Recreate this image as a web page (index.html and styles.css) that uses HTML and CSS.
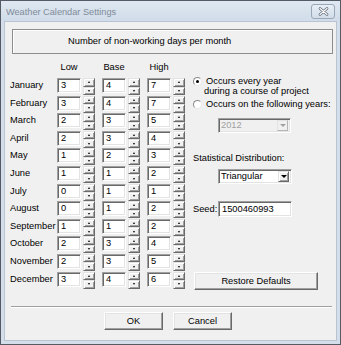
FILE: index.html
```html
<!DOCTYPE html>
<html>
<head>
<meta charset="utf-8">
<link rel="stylesheet" href="styles.css">
</head>
<body>
<div class="window">
  <div class="titlebar">
    <span class="title">Weather Calendar Settings</span>
    <div class="close"><svg width="11" height="9" viewBox="0 0 11 9"><path d="M2 1.5 L9 7.5 M9 1.5 L2 7.5" stroke="#5b6573" stroke-width="2.6" stroke-linecap="round"/><path d="M2 1.5 L9 7.5 M9 1.5 L2 7.5" stroke="#ffffff" stroke-width="1.2" stroke-linecap="round"/></svg></div>
  </div>
  <div class="client">
    <div class="banner">Number of non-working days per month</div>
    <div class="main">
      <div class="grid">
        <div></div><div class="head">Low</div><div class="head">Base</div><div class="head">High</div>

        <div class="month">January</div>
        <div class="spin"><div class="field">3</div><div class="arrows"><i class="up"></i><i class="dn"></i></div></div>
        <div class="spin"><div class="field">4</div><div class="arrows"><i class="up"></i><i class="dn"></i></div></div>
        <div class="spin"><div class="field">7</div><div class="arrows"><i class="up"></i><i class="dn"></i></div></div>

        <div class="month">February</div>
        <div class="spin"><div class="field">3</div><div class="arrows"><i class="up"></i><i class="dn"></i></div></div>
        <div class="spin"><div class="field">4</div><div class="arrows"><i class="up"></i><i class="dn"></i></div></div>
        <div class="spin"><div class="field">7</div><div class="arrows"><i class="up"></i><i class="dn"></i></div></div>

        <div class="month">March</div>
        <div class="spin"><div class="field">2</div><div class="arrows"><i class="up"></i><i class="dn"></i></div></div>
        <div class="spin"><div class="field">3</div><div class="arrows"><i class="up"></i><i class="dn"></i></div></div>
        <div class="spin"><div class="field">5</div><div class="arrows"><i class="up"></i><i class="dn"></i></div></div>

        <div class="month">April</div>
        <div class="spin"><div class="field">2</div><div class="arrows"><i class="up"></i><i class="dn"></i></div></div>
        <div class="spin"><div class="field">3</div><div class="arrows"><i class="up"></i><i class="dn"></i></div></div>
        <div class="spin"><div class="field">4</div><div class="arrows"><i class="up"></i><i class="dn"></i></div></div>

        <div class="month">May</div>
        <div class="spin"><div class="field">1</div><div class="arrows"><i class="up"></i><i class="dn"></i></div></div>
        <div class="spin"><div class="field">2</div><div class="arrows"><i class="up"></i><i class="dn"></i></div></div>
        <div class="spin"><div class="field">3</div><div class="arrows"><i class="up"></i><i class="dn"></i></div></div>

        <div class="month">June</div>
        <div class="spin"><div class="field">1</div><div class="arrows"><i class="up"></i><i class="dn"></i></div></div>
        <div class="spin"><div class="field">1</div><div class="arrows"><i class="up"></i><i class="dn"></i></div></div>
        <div class="spin"><div class="field">2</div><div class="arrows"><i class="up"></i><i class="dn"></i></div></div>

        <div class="month">July</div>
        <div class="spin"><div class="field">0</div><div class="arrows"><i class="up"></i><i class="dn"></i></div></div>
        <div class="spin"><div class="field">1</div><div class="arrows"><i class="up"></i><i class="dn"></i></div></div>
        <div class="spin"><div class="field">1</div><div class="arrows"><i class="up"></i><i class="dn"></i></div></div>

        <div class="month">August</div>
        <div class="spin"><div class="field">0</div><div class="arrows"><i class="up"></i><i class="dn"></i></div></div>
        <div class="spin"><div class="field">1</div><div class="arrows"><i class="up"></i><i class="dn"></i></div></div>
        <div class="spin"><div class="field">2</div><div class="arrows"><i class="up"></i><i class="dn"></i></div></div>

        <div class="month">September</div>
        <div class="spin"><div class="field">1</div><div class="arrows"><i class="up"></i><i class="dn"></i></div></div>
        <div class="spin"><div class="field">1</div><div class="arrows"><i class="up"></i><i class="dn"></i></div></div>
        <div class="spin"><div class="field">2</div><div class="arrows"><i class="up"></i><i class="dn"></i></div></div>

        <div class="month">October</div>
        <div class="spin"><div class="field">2</div><div class="arrows"><i class="up"></i><i class="dn"></i></div></div>
        <div class="spin"><div class="field">3</div><div class="arrows"><i class="up"></i><i class="dn"></i></div></div>
        <div class="spin"><div class="field">4</div><div class="arrows"><i class="up"></i><i class="dn"></i></div></div>

        <div class="month">November</div>
        <div class="spin"><div class="field">2</div><div class="arrows"><i class="up"></i><i class="dn"></i></div></div>
        <div class="spin"><div class="field">3</div><div class="arrows"><i class="up"></i><i class="dn"></i></div></div>
        <div class="spin"><div class="field">5</div><div class="arrows"><i class="up"></i><i class="dn"></i></div></div>

        <div class="month">December</div>
        <div class="spin"><div class="field">3</div><div class="arrows"><i class="up"></i><i class="dn"></i></div></div>
        <div class="spin"><div class="field">4</div><div class="arrows"><i class="up"></i><i class="dn"></i></div></div>
        <div class="spin"><div class="field">6</div><div class="arrows"><i class="up"></i><i class="dn"></i></div></div>
      </div>

      <div class="right">
        <div class="option first">
          <span class="radio checked"></span>
          <span class="opt-text"><span class="l1">Occurs every year</span><br>during a course of project</span>
        </div>
        <div class="option second">
          <span class="radio"></span>
          <span class="opt-text"><span class="l1">Occurs on the following years:</span></span>
        </div>
        <div class="combo disabled"><span class="val">2012</span><span class="cbtn"><i></i></span></div>
        <div class="label dist">Statistical Distribution:</div>
        <div class="combo tri"><span class="val">Triangular</span><span class="cbtn"><i></i></span></div>
        <div class="seed"><span class="seed-label">Seed:</span><div class="seed-field">1500460993</div></div>
        <div class="btn restore">Restore Defaults</div>
      </div>
    </div>
    <div class="sep"></div>
    <div class="buttons">
      <div class="btn ok">OK</div>
      <div class="btn cancel">Cancel</div>
    </div>
  </div>
</div>
</body>
</html>
```

FILE: styles.css
```css
* { box-sizing: border-box; }

body {
  margin: 0;
  background: #ffffff;
  font-family: "Liberation Sans", Arial, sans-serif;
  font-size: 9.3px;
  color: #000;
}

.window {
  width: 341px;
  height: 345px;
  border: 1px solid #545b64;
  background: #d3deea;
  padding: 0 4px 3px 4px;
  display: flex;
  flex-direction: column;
}

.titlebar {
  height: 20px;
  display: flex;
  align-items: center;
  justify-content: space-between;
  background: linear-gradient(#dfe8f2, #d0dce9);
  margin: 0 -4px;
  padding: 0 5px 0 5px;
}

.title {
  font-size: 9.2px;
  color: #7f8b98;
  margin-top: 1px;
}

.close {
  width: 24px;
  height: 15px;
  border: 1px solid #9aa7b6;
  border-radius: 3px;
  background: linear-gradient(#e7eef6, #d2dde9);
  display: flex;
  align-items: center;
  justify-content: center;
  margin-top: 1px;
}

.client {
  flex: 1;
  background: #f0f0f0;
  border: 1px solid #b8c4d1;
  margin: 0 -1px;
  padding: 0 0 0 0;
}

.banner {
  margin: 7px 3px 0 7px;
  height: 25px;
  border: 1px solid #8d8d8d;
  box-shadow: inset 1px 1px 0 #fdfdfd;
  padding-left: 55px;
  line-height: 23px;
}

.main {
  display: flex;
  padding-left: 5px;
  height: 237px;
}

.grid {
  margin-top: 6px;
  display: grid;
  grid-template-columns: 40px 38px 38px 38px;
  grid-template-rows: 18px repeat(12, 17.6px);
  column-gap: 7px;
  align-items: start;
}

.head {
  width: 24px;
  text-align: center;
  line-height: 14px;
}

.month {
  white-space: nowrap;
  line-height: 15px;
}

.spin {
  display: flex;
  gap: 2px;
}

.field {
  width: 24px;
  height: 15px;
  background: #fff;
  border: 1px solid;
  border-color: #a0a0a0 #ffffff #ffffff #a0a0a0;
  box-shadow: inset 1px 1px 0 #696969, inset -1px -1px 0 #e3e3e3;
  padding-left: 3px;
  line-height: 13px;
}

.arrows {
  width: 12px;
  height: 17px;
  display: flex;
  flex-direction: column;
}

.arrows i {
  flex: 1;
  display: flex;
  align-items: center;
  justify-content: center;
  background: #f0f0f0;
  border: 1px solid;
  border-color: #e3e3e3 #696969 #696969 #e3e3e3;
  box-shadow: inset 1px 1px 0 #fff, inset -1px -1px 0 #a0a0a0;
}

.arrows i::after {
  content: "";
  width: 0;
  height: 0;
  border-left: 1.5px solid transparent;
  border-right: 1.5px solid transparent;
}

.arrows i.up::after { border-bottom: 2px solid #000; }
.arrows i.dn::after { border-top: 2px solid #000; }

.right {
  margin-left: 8px;
  padding-top: 22px;
  display: flex;
  flex-direction: column;
  align-items: flex-start;
}

.option {
  display: flex;
  align-items: flex-start;
  line-height: 10px;
  white-space: nowrap;
}

.option.second {
  margin-top: 3px;
}

.radio {
  width: 9px;
  height: 9px;
  border-radius: 50%;
  border: 1px solid;
  border-color: #8a8a8a #e8e8e8 #e8e8e8 #8a8a8a;
  background: #fff;
  margin-top: 1px;
  margin-right: 2px;
  position: relative;
  flex: none;
}

.radio.checked::after {
  content: "";
  position: absolute;
  left: 2px;
  top: 2px;
  width: 3px;
  height: 3px;
  border-radius: 50%;
  background: #000;
}

.opt-text .l1 {
  margin-left: 2px;
}

.combo {
  margin-left: 25px;
  width: 73px;
  height: 15px;
  background: #fff;
  border: 1px solid;
  border-color: #a0a0a0 #ffffff #ffffff #a0a0a0;
  box-shadow: inset 1px 1px 0 #696969, inset -1px -1px 0 #e3e3e3;
  display: flex;
  align-items: center;
  padding: 1px 2px 1px 2px;
}

.combo .val {
  flex: 1;
  line-height: 11px;
}

.combo .cbtn {
  width: 11px;
  height: 11px;
  background: #f0f0f0;
  border: 1px solid;
  border-color: #e3e3e3 #696969 #696969 #e3e3e3;
  box-shadow: inset 1px 1px 0 #fff, inset -1px -1px 0 #a0a0a0;
  display: flex;
  align-items: center;
  justify-content: center;
}

.combo .cbtn i {
  width: 0;
  height: 0;
  border-left: 3px solid transparent;
  border-right: 3px solid transparent;
  border-top: 3px solid #000;
}

.combo.disabled {
  margin-top: 9px;
  background: #f0f0f0;
  color: #a0a0a0;
}

.combo.disabled .cbtn {
  border-color: #e3e3e3 #b5b5b5 #b5b5b5 #e3e3e3;
  box-shadow: none;
}

.combo.disabled .cbtn i {
  border-top-color: #a0a0a0;
}

.label.dist {
  margin-top: 20px;
  line-height: 10px;
}

.combo.tri {
  margin-top: 6px;
  width: 74px;
}

.seed {
  margin-top: 17px;
  display: flex;
  align-items: center;
}

.seed-label {
  width: 25px;
}

.seed-field {
  width: 74px;
  height: 16px;
  background: #fff;
  border: 1px solid;
  border-color: #a0a0a0 #ffffff #ffffff #a0a0a0;
  box-shadow: inset 1px 1px 0 #696969, inset -1px -1px 0 #e3e3e3;
  padding-left: 3px;
  line-height: 14px;
}

.btn {
  height: 18px;
  background: #f0f0f0;
  border: 1px solid;
  border-color: #ffffff #696969 #696969 #ffffff;
  box-shadow: inset -1px -1px 0 #a0a0a0, inset 1px 1px 0 #e3e3e3;
  text-align: center;
  line-height: 16px;
}

.btn.restore {
  margin-top: 55px;
  margin-left: 1px;
  width: 124px;
}

.sep {
  margin: 15px 4px 0 6px;
  height: 2px;
  border-top: 1px solid #a0a0a0;
  border-bottom: 1px solid #ffffff;
}

.buttons {
  display: flex;
  gap: 10px;
  margin-top: 4px;
  margin-left: 99px;
}

.btn.ok, .btn.cancel {
  width: 59px;
}
```
